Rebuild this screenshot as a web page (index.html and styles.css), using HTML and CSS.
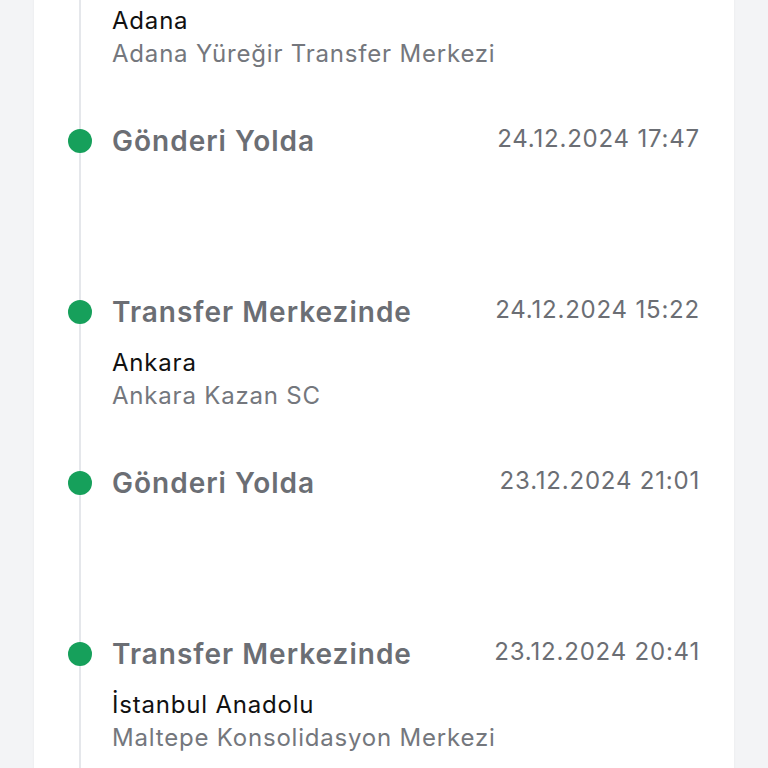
FILE: index.html
```html
<!DOCTYPE html>
<html>
  <head>
    <title>Gönderi Hareketleri</title>
    <meta name="viewport" content="width=device-width, initial-scale=1">
    <link rel="stylesheet" href="styles.css">
  </head>
  <body>
    <div class="card">
      <ul class="timeline">
        <li class="step">
          <div class="row"><span class="title">Transfer Merkezinde</span><span class="date">25.12.2024 08:12</span></div>
          <div class="place"><div class="city">Adana</div><div class="unit">Adana Yüreğir Transfer Merkezi</div></div>
        </li>
        <li class="step">
          <div class="row"><span class="title">Gönderi Yolda</span><span class="date">24.12.2024 17:47</span></div>
          <div class="place"></div>
        </li>
        <li class="step">
          <div class="row"><span class="title">Transfer Merkezinde</span><span class="date">24.12.2024 15:22</span></div>
          <div class="place"><div class="city">Ankara</div><div class="unit">Ankara Kazan SC</div></div>
        </li>
        <li class="step">
          <div class="row"><span class="title">Gönderi Yolda</span><span class="date">23.12.2024 21:01</span></div>
          <div class="place"></div>
        </li>
        <li class="step">
          <div class="row"><span class="title">Transfer Merkezinde</span><span class="date">23.12.2024 20:41</span></div>
          <div class="place"><div class="city">İstanbul Anadolu</div><div class="unit">Maltepe Konsolidasyon Merkezi</div></div>
        </li>
      </ul>
    </div>
  </body>
</html>
```
FILE: styles.css
```css
html {background:#f3f4f6;}
body {margin:0; font-family:Inter,"Noto Sans",sans-serif; background:#f3f4f6; overflow:hidden; height:768px;}
.card {background:#fff; margin:-48px 34px 0; padding:0 34px; box-shadow:0 0 2px rgba(0,0,0,.06);}
.timeline {list-style:none; margin:0; padding:0; position:relative;}
.timeline:before {content:""; position:absolute; left:11px; top:0; bottom:0; width:2px; background:#e5e7eb;}
.step {position:relative; padding-left:44px; height:171px; box-sizing:border-box;}
.step:before {content:""; position:absolute; left:0; top:6px; width:24px; height:24px; border-radius:50%; background:#16a05b;}
.row {display:flex; justify-content:space-between; align-items:flex-start; height:36px;}
.title {font-size:28px; line-height:36px; font-weight:600; color:#6b6e74; letter-spacing:1px;}
.date {font-size:24px; line-height:32px; color:#6b6e74; letter-spacing:.8px;}
.place {margin-top:16px; font-size:24px; line-height:33px; letter-spacing:.8px;}
.city {color:#111;}
.unit {color:#74777d;}
```
